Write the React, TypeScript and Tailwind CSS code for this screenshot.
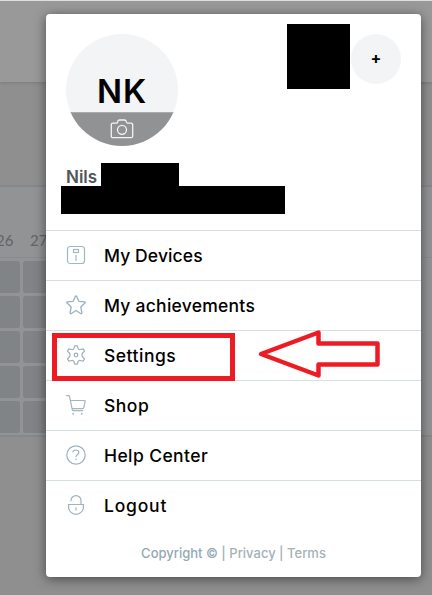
import React from "react";

const weeks = [0, 1, 2, 3, 4];

function DeviceIcon() {
  return (
    <svg className="h-5 w-5" viewBox="0 0 20 20" fill="none" stroke="#a4b7bf">
      <rect x="1.5" y="1.5" width="17" height="17" rx="2.8" stroke="#9dbbbb" strokeWidth="1.2" />
      <rect x="7.5" y="4.5" width="5" height="3" strokeWidth="1.2" />
      <path d="M10 10v6" strokeWidth="1.2" />
    </svg>
  );
}

function StarIcon() {
  return (
    <svg className="h-5 w-5" viewBox="0 0 20 20" fill="none" stroke="#9fb2bf" strokeWidth="1.35" strokeLinejoin="round">
      <path d="M9.3 1.4Q10 .2 10.7 1.4l2.1 4.9 5.6.5q1.4.3.5 1.3l-4.1 3.8 1.1 5.7q0 1.6-1.3.9L10 15.5l-4.6 3q-1.3.7-1.3-.9l1.1-5.7-4.1-3.8Q.2 7.1 1.6 6.8l5.6-.5z" />
    </svg>
  );
}

function GearIcon() {
  return (
    <svg className="h-5 w-5" viewBox="0 0 20 20" fill="none" stroke="#a0b2be" strokeWidth="1.25" strokeLinejoin="round">
      <path d="M8.8.8h2.4l.8 2.5q.6 1.6 2.2 1.2l2.9-.7 1.4 2.3-2.1 2.2q-1 1.7 0 3.4l2.1 2.2-1.4 2.3-2.9-.7q-1.6-.4-2.2 1.2l-.8 2.5H8.8L8 16.7q-.6-1.6-2.2-1.2l-2.9.7-1.4-2.3 2.1-2.2q1-1.7 0-3.4L1.5 6.1l1.4-2.3 2.9.7Q7.4 4.9 8 3.3z" />
      <circle cx="10" cy="10" r="1.8" />
    </svg>
  );
}

function CartIcon() {
  return (
    <svg className="h-5 w-5" viewBox="0 0 20 20" fill="none" stroke="#a4b5bf" strokeWidth="1.2" strokeLinecap="round" strokeLinejoin="round">
      <path d="M.6.7h2q.7 0 .9.7l2.8 13.4q.2.8 1 .8h9.4M4.5 5.5h14q.7 0 .6.8L17.9 12.4q-.3 1.2-1.5 1.2H6.1" />
      <circle cx="7.2" cy="18.8" r=".4" />
      <circle cx="15.7" cy="18.8" r=".4" />
    </svg>
  );
}

function HelpIcon() {
  return (
    <svg className="h-5 w-5" viewBox="0 0 20 20" fill="none" stroke="#9fb2bf" strokeWidth="1.2">
      <circle cx="10" cy="10" r="9.2" />
      <path d="M6.9 7.3C7 5.8 8.1 5 9.8 5c1.8 0 3.1.9 3.1 2.4 0 2.1-2.9 2.1-2.9 4.5" />
      <path d="M10 13.6v1.5" />
    </svg>
  );
}

function LockIcon() {
  return (
    <svg className="h-5 w-5" viewBox="0 0 20 20" fill="none" stroke="#9fb2bf" strokeWidth="1.2">
      <path d="M2.6 9.5h14.8v2.6a7.4 7.2 0 0 1-14.8 0zM5 6.2V5.5a5 4.9 0 0 1 10 0v4" />
      <path d="M10 12.3v3.2" />
    </svg>
  );
}

function CameraIcon() {
  return (
    <svg className="h-5 w-6" viewBox="0 0 24 20" fill="none" stroke="#f3f4f6" strokeWidth="1.3" strokeLinejoin="round">
      <path d="M3 4.2h3.2q.9 0 1.2-.8l.4-1.1Q8.2 1 9.4 1h5.2q1.2 0 1.6 1.3l.4 1.1q.3.8 1.2.8H21q1.7 0 1.7 1.5v11.5q0 1.5-1.7 1.5H3q-1.7 0-1.7-1.5V5.7Q1.3 4.2 3 4.2z" />
      <circle cx="12" cy="10.8" r="4.5" />
    </svg>
  );
}

const items = [
  { label: "My Devices", icon: <DeviceIcon />, tracking: "tracking-[0.1px]" },
  { label: "My achievements", icon: <StarIcon />, tracking: "tracking-[0.25px]" },
  { label: "Settings", icon: <GearIcon />, tracking: "tracking-[0.5px]" },
  { label: "Shop", icon: <CartIcon />, tracking: "tracking-[0.5px]" },
  { label: "Help Center", icon: <HelpIcon />, tracking: "tracking-[0.4px]" },
  { label: "Logout", icon: <LockIcon />, tracking: "tracking-[0.8px]" },
];

function CalendarBackdrop() {
  return (
    <div className="flex h-full flex-col bg-[#8f8f8f]">
      <div className="h-[82px] border-t border-[#dedede] bg-[#999999] shadow-[0_1px_3px_rgba(0,0,0,0.15)]" />
      <div className="h-[103px]" />
      <div className="h-[252px] border-y-2 border-[#85898c] bg-[#929395] font-['Lato',sans-serif]">
        <div className="flex h-[70px] items-end pb-[8px] text-[15px] leading-[18px] text-[#626466]">
          <span className="-ml-1 w-[34px]">26</span>
          <span>27</span>
        </div>
        <div className="flex flex-col gap-[3px] border-t border-[#888b8e] pt-[3px]">
          {weeks.map((week) => (
            <div key={week} className="flex h-8 gap-[3px]">
              <div className="w-5 rounded-r-[3px] bg-[#808486]" />
              <div className="w-8 rounded-[3px] bg-[#808486]" />
            </div>
          ))}
        </div>
      </div>
    </div>
  );
}

export default function App() {
  return (
    <div className="relative h-[595px] w-[432px] overflow-hidden font-['Inter',sans-serif]">
      <CalendarBackdrop />
      <div className="absolute top-[14px] left-[46px] flex h-[563px] w-[375px] flex-col rounded-[4px] bg-white shadow-[0_2px_12px_rgba(0,0,0,0.5)]">
        <div className="h-[216px] pt-[10px]">
          <div className="flex justify-between pr-5 pl-5">
            <div className="mt-[10px] flex h-28 w-28 flex-col overflow-hidden rounded-full bg-[#f3f4f6]">
              <div className="flex h-[78px] items-end justify-center text-[33px] leading-[42px] font-semibold tracking-[0.8px] text-black">
                NK
              </div>
              <div className="flex h-[34px] justify-center border-t border-[#a9abad] bg-[#919294] pt-[6px]">
                <CameraIcon />
              </div>
            </div>
            <div className="flex gap-[1px]">
              <div className="h-[65px] w-[63px] bg-black" />
              <div className="mt-[10px] flex h-[50px] w-[50px] items-center justify-center rounded-full bg-[#f3f4f6] pb-[2px] text-[16px] font-bold text-black">
                +
              </div>
            </div>
          </div>
          <div className="mt-[17px] flex h-[23px] pl-5">
            <span className="w-[35px] pt-[3px] text-[17px] leading-[22px] font-semibold text-[#515659]">Nils</span>
            <div className="h-[23px] w-[78px] bg-black" />
          </div>
          <div className="ml-[15px] h-7 w-56 bg-black" />
        </div>
        <nav>
          {items.map((item) => (
            <div key={item.label} className="flex h-[50px] items-center border-t border-[#d6dfe1] pb-[1px] pl-5">
              {item.icon}
              <span className={`ml-[18px] pt-[2px] text-[17.5px] leading-6 font-medium text-black ${item.tracking}`}>
                {item.label}
              </span>
            </div>
          ))}
        </nav>
        <footer className="pt-[14px] text-center text-[13px] leading-[18px] font-medium whitespace-nowrap text-[#a5b1b7]">
          <span className="text-[#93a8b5]">Copyright ©</span> | Privacy | Terms
        </footer>
      </div>
      <div className="absolute top-[333px] left-[52px] h-12 w-[183px] border-[5px] border-[#ed1c24]" />
      <svg className="absolute top-[328px] left-[256px] h-[52px] w-[126px]" viewBox="256 328 126 52" fill="none" stroke="#ed1c24" strokeWidth="4.5" strokeLinejoin="round">
        <path d="M261 354 318.5 332.5v11H377.5v21H318.5v11z" />
      </svg>
    </div>
  );
}
